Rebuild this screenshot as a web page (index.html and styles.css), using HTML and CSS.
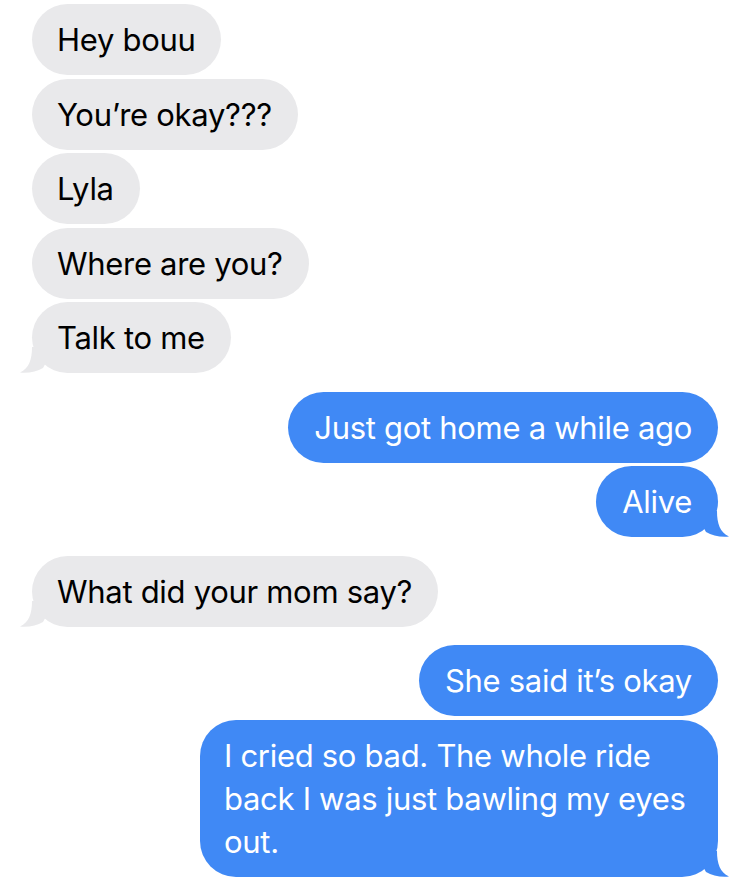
FILE: index.html
```html
<!DOCTYPE html>
<html lang="en">
<head>
    <meta charset="UTF-8">
    <meta name="viewport" content="width=device-width, initial-scale=1.0">
    <title>Messages</title>
    <link rel="stylesheet" href="styles.css">
</head>
<body>
    <div class="thread">
        <div class="group in">
            <div class="bubble">Hey bouu</div>
            <div class="bubble">You’re okay???</div>
            <div class="bubble">Lyla</div>
            <div class="bubble">Where are you?</div>
            <div class="bubble last">Talk to me
                <svg class="tail" width="28" height="26" viewBox="0 0 28 26"><path d="M12 0 C12 13 9 21 0 25.6 C9 26.4 17 24.6 23 21 L28 12 L28 0 Z"/></svg>
            </div>
        </div>

        <div class="group out">
            <div class="bubble">Just got home a while ago</div>
            <div class="bubble last">Alive
                <svg class="tail" width="28" height="26" viewBox="0 0 28 26"><path d="M12 0 C12 13 9 21 0 25.6 C9 26.4 17 24.6 23 21 L28 12 L28 0 Z"/></svg>
            </div>
        </div>

        <div class="group in">
            <div class="bubble last">What did your mom say?
                <svg class="tail" width="28" height="26" viewBox="0 0 28 26"><path d="M12 0 C12 13 9 21 0 25.6 C9 26.4 17 24.6 23 21 L28 12 L28 0 Z"/></svg>
            </div>
        </div>

        <div class="group out">
            <div class="bubble">She said it’s okay</div>
            <div class="bubble long last">I cried so bad. The whole ride back I was just bawling my eyes out.
                <svg class="tail" width="28" height="26" viewBox="0 0 28 26"><path d="M12 0 C12 13 9 21 0 25.6 C9 26.4 17 24.6 23 21 L28 12 L28 0 Z"/></svg>
            </div>
        </div>
    </div>
</body>
</html>
```

FILE: styles.css
```css
body {
    margin: 0;
    background: #fff;
    font-family: Inter, "Noto Sans", sans-serif;
}
.thread {
    display: flex;
    flex-direction: column;
    gap: 18.5px;
    padding: 4px 32px 0;
}
.group {
    display: flex;
    flex-direction: column;
    gap: 3.5px;
}
.group.in {
    align-items: flex-start;
}
.group.out {
    align-items: flex-end;
}
.bubble {
    position: relative;
    max-width: 470px;
    padding: 14px 26px 14px 25px;
    border-radius: 36px;
    font-size: 31px;
    line-height: 43px;
    letter-spacing: -0.3px;
}
.in .bubble {
    background: #e9e9eb;
    color: #000;
}
.out .bubble {
    background: #4089f5;
    color: #fff;
    padding: 14px 26px;
}
.out .long {
    padding: 14px 24px;
}
.tail {
    position: absolute;
    bottom: 0;
}
.in .tail {
    left: -12px;
    fill: #e9e9eb;
}
.out .tail {
    right: -11px;
    fill: #4089f5;
    transform: scaleX(-1);
}
```
